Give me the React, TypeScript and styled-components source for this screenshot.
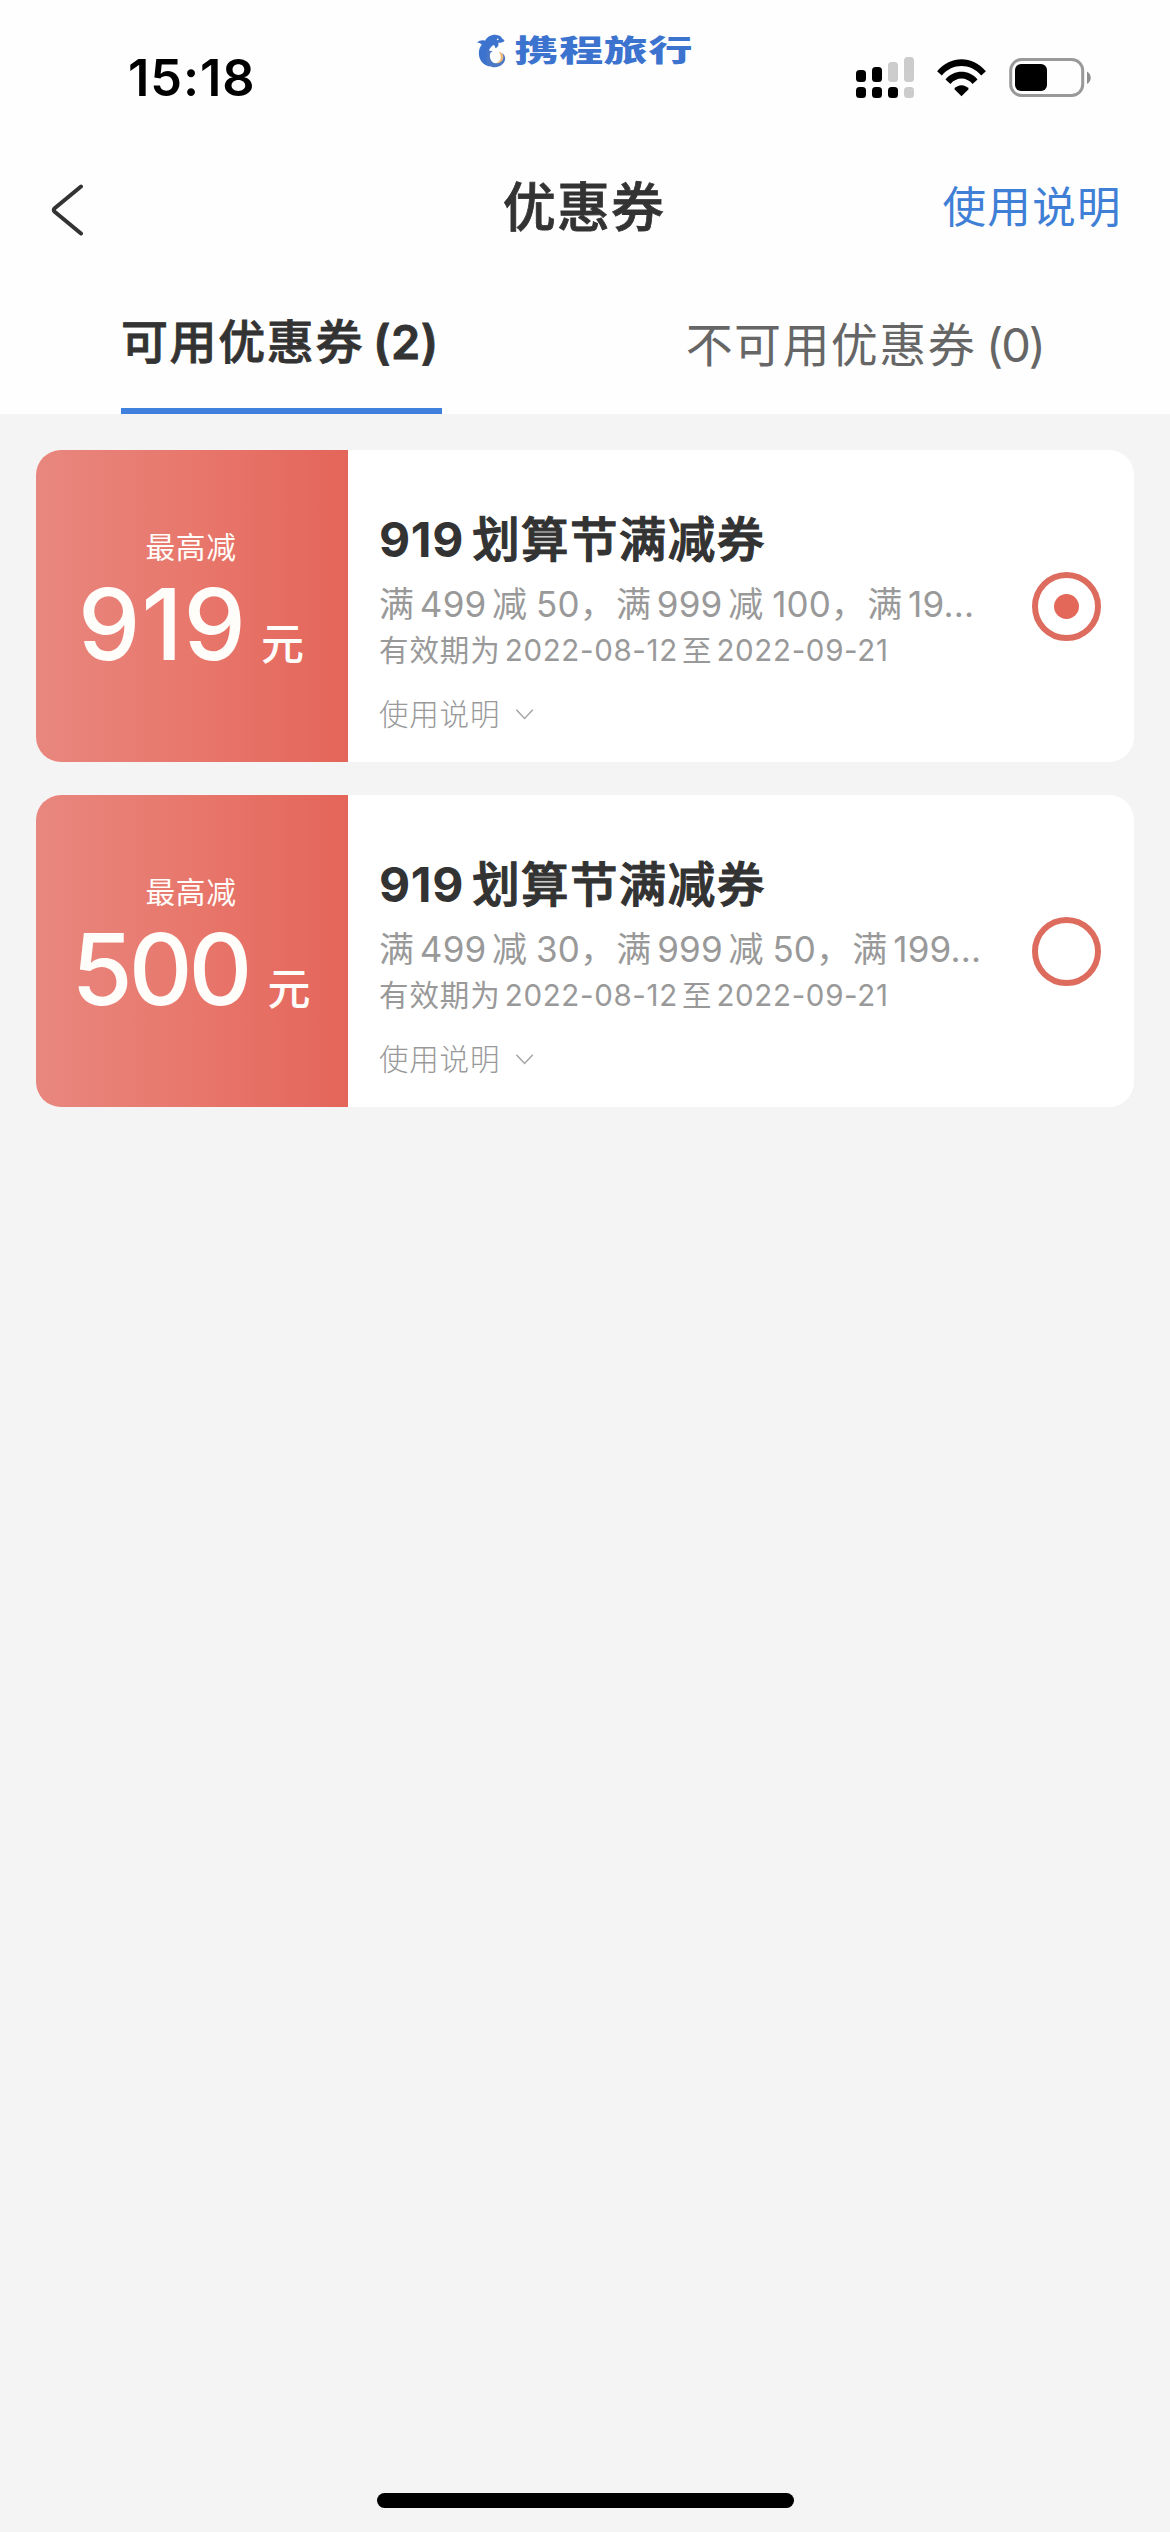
import React from "react";
import styled, { createGlobalStyle } from "styled-components";

const GlobalStyle = createGlobalStyle`
  * { box-sizing: border-box; }
  body {
    margin: 0;
    background: #f4f4f4;
    font-family: Inter, "Noto Sans CJK SC", sans-serif;
    -webkit-font-smoothing: antialiased;
  }
`;

const Screen = styled.div`
  display: flex;
  flex-direction: column;
  width: 1170px;
  height: 2532px;
  background: #f4f4f4;
  overflow: hidden;
`;

const Header = styled.header`
  background: #fefefe;
  height: 414px;
  display: flex;
  flex-direction: column;
`;

const StatusBar = styled.div`
  display: grid;
  grid-template-columns: 1fr 216px 1fr;
  height: 156px;
`;

const Clock = styled.div`
  padding: 48px 0 0 128px;
  font-size: 50.5px;
  line-height: 60px;
  font-weight: 600;
  letter-spacing: 0.9px;
  color: #000;
`;

const Brand = styled.div`
  display: flex;
  align-items: center;
  height: 36px;
  margin-top: 33px;
  gap: 9px;
  color: #3c73cf;
`;

const BrandName = styled.span`
  padding-bottom: 2px;
  font-size: 44px;
  line-height: 36px;
  font-weight: 900;
  letter-spacing: 0.6px;
  white-space: nowrap;
  transform: scaleY(0.67);
`;

const StatusIcons = styled.div`
  display: flex;
  align-items: flex-start;
  justify-content: flex-end;
  padding: 55px 78px 0 0;
`;

const NavBar = styled.nav`
  display: grid;
  grid-template-columns: 1fr auto 1fr;
  align-items: center;
  height: 104px;
  padding: 0 48px 0 50px;
`;

const BackButton = styled.button`
  border: 0;
  padding: 4px 0 0;
  background: none;
  justify-self: start;
  display: flex;
`;

const PageTitle = styled.h1`
  margin: 0 4px 0 0;
  font-size: 53px;
  line-height: 60px;
  font-weight: 500;
  letter-spacing: 1.2px;
  color: #333;
  -webkit-text-stroke: 0.8px #333;
`;

const HelpLink = styled.a`
  justify-self: end;
  padding-bottom: 2px;
  font-size: 43.5px;
  line-height: 60px;
  letter-spacing: 1.4px;
  color: #3f80d6;
  font-weight: 400;
`;

const Tabs = styled.div`
  display: flex;
  justify-content: space-between;
  flex: 1;
  padding: 0 126px 0 121px;
`;

const Tab = styled.div<{ $active?: boolean }>`
  display: flex;
  align-items: flex-start;
  height: 154px;
  padding-top: ${(p) => (p.$active ? 52 : 55)}px;
  border-bottom: ${(p) => (p.$active ? "6px solid #3f80dd" : "0")};
  font-size: 47px;
  line-height: 60px;
  letter-spacing: ${(p) => (p.$active ? 1.6 : 1.4)}px;
  font-weight: ${(p) => (p.$active ? 500 : 400)};
  color: ${(p) => (p.$active ? "#333" : "#666")};
  -webkit-text-stroke: ${(p) => (p.$active ? "0.8px #333" : "0")};
  white-space: nowrap;
  width: ${(p) => (p.$active ? "321px" : "auto")};
`;

const Count = styled.span<{ $active?: boolean }>`
  margin-left: ${(p) => (p.$active ? 9 : 10)}px;
  font-weight: ${(p) => (p.$active ? 600 : 400)};
  letter-spacing: ${(p) => (p.$active ? "0.5px" : "-2px")};
`;

const CouponList = styled.main`
  flex: 1;
  display: flex;
  flex-direction: column;
  gap: 33px;
  padding: 36px;
`;

const Card = styled.article`
  display: grid;
  grid-template-columns: 312px 1fr 102px;
  height: 312px;
  border-radius: 25px;
  background: #fff;
  overflow: hidden;
`;

const AmountPanel = styled.div`
  display: flex;
  flex-direction: column;
  align-items: center;
  padding: 77px 2px 0 0;
  color: #fffdfa;
  background: linear-gradient(90deg, #e8877f 0%, #e8776c 50%, #e4655a 100%);
`;

const AmountLabel = styled.div`
  font-size: 29.7px;
  line-height: 40px;
  letter-spacing: 0.6px;
`;

const Amount = styled.div<{ $tracking: number }>`
  display: flex;
  align-items: baseline;
  gap: ${(p) => 15 - p.$tracking}px;
  margin-top: 1px;
  font-size: 99px;
  line-height: 112px;
  font-weight: 500;
  letter-spacing: ${(p) => p.$tracking}px;
`;

const AmountUnit = styled.span`
  font-size: 43px;
  letter-spacing: 0;
`;

const Details = styled.div`
  display: flex;
  flex-direction: column;
  align-items: flex-start;
  padding: 60px 0 0 31px;
  white-space: nowrap;
`;

const CouponTitle = styled.h2`
  margin: 0;
  font-size: 47.5px;
  line-height: 60px;
  font-weight: 500;
  letter-spacing: 1.4px;
  color: #333;
  -webkit-text-stroke: 1.1px #333;
`;

const TitleNumber = styled.span`
  margin-right: 8px;
  font-weight: 700;
  font-size: 48px;
  letter-spacing: 0.7px;
  -webkit-text-stroke: 0;
`;

const Rule = styled.div`
  margin-top: 11px;
  font-size: 35px;
  line-height: 46px;
  letter-spacing: 1.3px;
  color: #999;
`;

const Spend = styled.span`
  margin: 0 0.16em 0 0.13em;
  letter-spacing: 0.2px;
`;

const Off = styled.span`
  margin-left: 0.22em;
  letter-spacing: 0.1px;
`;

const Validity = styled.div`
  margin-top: 1px;
  font-size: 29.5px;
  line-height: 44px;
  letter-spacing: 0.9px;
  color: #999;
`;

const DateText = styled.span`
  margin: 0 0.14em;
  letter-spacing: 0.65px;
`;

const Usage = styled.div`
  display: flex;
  align-items: center;
  gap: 16px;
  margin-top: 21px;
  font-size: 29.5px;
  line-height: 42px;
  letter-spacing: 0.8px;
  font-weight: 300;
  color: #999;
`;

const RadioCell = styled.div`
  padding-top: 122px;
`;

const Radio = styled.div`
  display: flex;
  align-items: center;
  justify-content: center;
  width: 69px;
  height: 69px;
  border: 6px solid #dd6c5e;
  border-radius: 50%;
`;

const RadioDot = styled.div`
  width: 25px;
  height: 25px;
  border-radius: 50%;
  background: #e4685a;
`;

const HomeArea = styled.footer`
  display: flex;
  justify-content: center;
  height: 39px;
`;

const HomeIndicator = styled.div`
  width: 417px;
  height: 15px;
  border-radius: 8px;
  background: #000;
`;

const DolphinLogo = () => (
  <svg width="30" height="36" viewBox="0 0 30 36">
    <path
      fill="#3c73cf"
      d="M0 9.2C2.5 6.8 6 6.3 8.4 7.2C10.6 3 15.5 .4 20.5 1.1C24 1.5 26.3 3.5 27 5.8C28.4 6 29.2 6.8 28.6 7.6C27.6 9.2 25 9.5 22.4 9.4C23 12.3 21.8 14.4 19.2 15.2C19.2 13.7 18.6 12.5 17.6 11.8C15 13.2 13.2 15.3 12.5 18C11.2 22.8 12.4 28.5 17.2 33.8C9.5 35.2 3.2 30 2.1 22.6C1.5 18.2 2.5 14.6 5 11.3C3.6 10 2 9.4 0 9.2Z"
    />
    <path
      fill="#4a78c4"
      d="M10.8 22C9.6 20.2 10 18 11.3 17C12.2 17.9 14.8 17.4 16.5 18.6C14.6 19 13.8 20.1 13.6 22C13.1 26.1 15.4 30.6 19.2 30.9C23.8 31 27 27.6 27.2 24.4C27.3 22.5 26.6 21 25.6 19.8C28.6 21.4 29.8 23.8 29.5 26.5C29 31.7 23.3 36 16.8 35C11 34.1 8.4 28 10.8 22Z"
    />
    <path
      fill="#efb878"
      d="M22.6 18.8C26 19.3 28 21.8 27.6 25C27.1 28.6 23.8 31.2 20 30.8C23 29.8 25 27.2 25 24.2C25 22.2 24.2 20.3 22.6 18.8Z"
    />
    <circle cx="21.7" cy="5.7" r="0.9" fill="#fff" />
  </svg>
);

const SignalIcon = () => (
  <svg width="58" height="43" viewBox="0 0 58 43">
    <g fill="#000">
      <rect x="0" y="15" width="10" height="12" rx="3.5" />
      <rect x="16" y="12" width="10" height="15" rx="3.5" />
      <rect x="0" y="32" width="10" height="11" rx="3.5" />
      <rect x="16" y="32" width="10" height="11" rx="3.5" />
      <rect x="32" y="32" width="10" height="11" rx="3.5" />
    </g>
    <g fill="#ccc">
      <rect x="32" y="7" width="10" height="20" rx="3.5" />
      <rect x="48" y="2" width="10" height="25" rx="3.5" />
      <rect x="48" y="32" width="10" height="11" rx="3.5" />
    </g>
  </svg>
);

const WifiSvg = styled.svg`
  margin: 4px 0 0 22px;
`;

const WifiIcon = () => (
  <WifiSvg width="51" height="38" viewBox="0 0 51 38">
    <path d="M1.1 12.3C14.6-3.7 36.4-3.7 49.9 12.3L45.2 16.4C34.4 3.9 16.6 3.9 5.8 16.4Z" />
    <path d="M9.5 20.5C18 10.3 33 10.3 41.5 20.5L36.6 25C30.4 17.6 20.6 17.6 14.4 25Z" />
    <path d="M18.2 30C21.8 25.1 29.2 25.1 32.8 30L25.5 37.2Z" />
  </WifiSvg>
);

const BatterySvg = styled.svg`
  margin: 3px 0 0 22px;
`;

const BatteryIcon = () => (
  <BatterySvg width="83" height="40" viewBox="0 0 83 40">
    <rect x="1.7" y="1.5" width="72" height="36" rx="11" fill="none" stroke="#999" strokeWidth="3" />
    <rect x="6" y="6" width="32" height="27" rx="6" />
    <path d="M78 13.5C83 16 83 23.5 78 26Z" fill="#8e8e8e" />
  </BatterySvg>
);

const BackIcon = () => (
  <svg width="34" height="52" viewBox="0 0 34 52">
    <path
      d="M31 2.5L4.7 24.2Q2.8 26 4.7 27.8L31 49.5"
      fill="none"
      stroke="#333"
      strokeWidth="4"
      strokeLinecap="round"
    />
  </svg>
);

const ExpandIcon = () => (
  <svg width="18" height="11" viewBox="0 0 18 11">
    <path d="M.4 .8L8.6 9.4L16.8 .8" fill="none" stroke="#a5a5a5" strokeWidth="1.5" />
  </svg>
);

type Coupon = { amount: string; tracking: number; steps: [string, string][]; tail: string; selected: boolean };

const coupons: Coupon[] = [
  {
    amount: "919",
    tracking: 1,
    steps: [["499", "50"], ["999", "100"]],
    tail: "19...",
    selected: true,
  },
  {
    amount: "500",
    tracking: -4,
    steps: [["499", "30"], ["999", "50"]],
    tail: "199...",
    selected: false,
  },
];

const CouponCard = ({ amount, tracking, steps, tail, selected }: Coupon) => (
  <Card>
    <AmountPanel>
      <AmountLabel>最高减</AmountLabel>
      <Amount $tracking={tracking}>
        {amount}
        <AmountUnit>元</AmountUnit>
      </Amount>
    </AmountPanel>
    <Details>
      <CouponTitle>
        <TitleNumber>919</TitleNumber>划算节满减券
      </CouponTitle>
      <Rule>
        {steps.map(([spend, off]) => (
          <React.Fragment key={spend}>
            满<Spend>{spend}</Spend>减<Off>{off}</Off>，
          </React.Fragment>
        ))}
        满<Spend>{tail}</Spend>
      </Rule>
      <Validity>
        有效期为<DateText>2022-08-12</DateText>至<DateText>2022-09-21</DateText>
      </Validity>
      <Usage>
        使用说明
        <ExpandIcon />
      </Usage>
    </Details>
    <RadioCell>
      <Radio>{selected && <RadioDot />}</Radio>
    </RadioCell>
  </Card>
);

export default function App() {
  return (
    <Screen>
      <GlobalStyle />
      <Header>
        <StatusBar>
          <Clock>15:18</Clock>
          <Brand>
            <DolphinLogo />
            <BrandName>携程旅行</BrandName>
          </Brand>
          <StatusIcons>
            <SignalIcon />
            <WifiIcon />
            <BatteryIcon />
          </StatusIcons>
        </StatusBar>
        <NavBar>
          <BackButton aria-label="返回">
            <BackIcon />
          </BackButton>
          <PageTitle>优惠券</PageTitle>
          <HelpLink>使用说明</HelpLink>
        </NavBar>
        <Tabs>
          <Tab $active>
            可用优惠券<Count $active>(2)</Count>
          </Tab>
          <Tab>
            不可用优惠券<Count>(0)</Count>
          </Tab>
        </Tabs>
      </Header>
      <CouponList>
        {coupons.map((c) => (
          <CouponCard key={c.amount} {...c} />
        ))}
      </CouponList>
      <HomeArea>
        <HomeIndicator />
      </HomeArea>
    </Screen>
  );
}
